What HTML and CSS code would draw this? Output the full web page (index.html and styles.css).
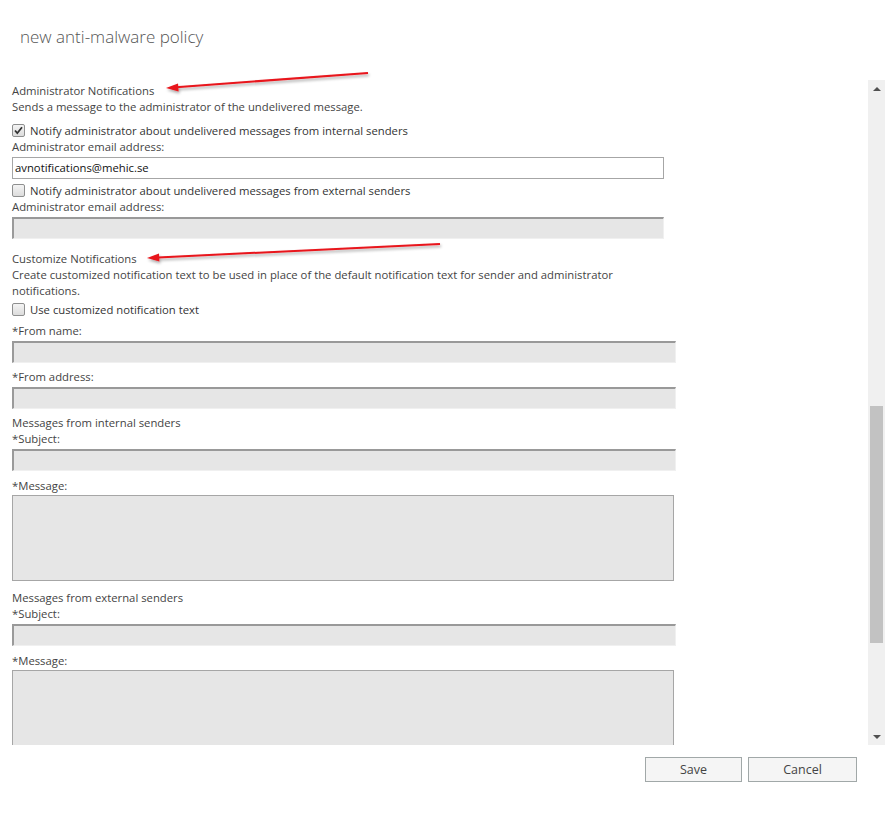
FILE: index.html
```html
<!DOCTYPE html>
<html>
<head>
<meta charset="utf-8">
<link rel="stylesheet" href="styles.css">
</head>
<body>
<div class="page">
  <header class="header"><h1 class="title">new anti-malware policy</h1></header>
  <div class="pane">
    <div class="content">
      <div class="section-title first">Administrator Notifications</div>
      <div class="text">Sends a message to the administrator of the undelivered message.</div>
      <div class="check-row"><span class="cb checked"><svg viewBox="0 0 13 13" width="13" height="13"><path d="M3 6.5 L5.3 9.2 L10 3.2" fill="none" stroke="#333" stroke-width="1.8"/></svg></span><span class="cb-label">Notify administrator about undelivered messages from internal senders</span></div>
      <div class="text">Administrator email address:</div>
      <div class="input active w1">avnotifications@mehic.se</div>
      <div class="check-row tight"><span class="cb"></span><span class="cb-label">Notify administrator about undelivered messages from external senders</span></div>
      <div class="text">Administrator email address:</div>
      <div class="input disabled w1"></div>

      <div class="section-title">Customize Notifications</div>
      <div class="text desc">Create customized notification text to be used in place of the default notification text for sender and administrator notifications.</div>
      <div class="check-row tight"><span class="cb"></span><span class="cb-label">Use customized notification text</span></div>
      <div class="text label">*From name:</div>
      <div class="input disabled w2"></div>
      <div class="text label">*From address:</div>
      <div class="input disabled w2"></div>
      <div class="text label">Messages from internal senders</div>
      <div class="text">*Subject:</div>
      <div class="input disabled w2"></div>
      <div class="text label msg">*Message:</div>
      <div class="textarea"></div>
      <div class="text label group">Messages from external senders</div>
      <div class="text">*Subject:</div>
      <div class="input disabled w2"></div>
      <div class="text label msg">*Message:</div>
      <div class="textarea"></div>
    </div>
    <div class="scrollbar">
      <div class="sb-btn"><span class="tri up"></span></div>
      <div class="sb-track"><div class="sb-thumb"></div></div>
      <div class="sb-btn"><span class="tri down"></span></div>
    </div>
  </div>
  <footer class="footer">
    <button class="btn save">Save</button>
    <button class="btn cancel">Cancel</button>
  </footer>
  <svg class="annot" width="890" height="815" viewBox="0 0 890 815">
    <defs>
      <filter id="sh" x="-10%" y="-50%" width="120%" height="200%">
        <feGaussianBlur in="SourceAlpha" stdDeviation="1.5"/>
        <feOffset dx="1" dy="2" result="b"/>
        <feComponentTransfer><feFuncA type="linear" slope="0.35"/></feComponentTransfer>
        <feMerge><feMergeNode/><feMergeNode in="SourceGraphic"/></feMerge>
      </filter>
    </defs>
    <g filter="url(#sh)" fill="#e8141b" stroke="#e8141b">
      <line x1="368" y1="73" x2="176" y2="87.2" stroke-width="2"/>
      <polygon points="166,88 178,83.5 178.6,91.4" stroke="none"/>
      <line x1="440" y1="244" x2="158" y2="257.5" stroke-width="2"/>
      <polygon points="147,258 159,253.5 159.4,261.5" stroke="none"/>
    </g>
  </svg>
</div>
</body>
</html>
```

FILE: styles.css
```css
* { box-sizing: border-box; }
html, body { margin: 0; padding: 0; background: #fff; }
body {
  font-family: "Open Sans", "Noto Sans", "Liberation Sans", sans-serif;
  font-size: 11.3px;
  color: #444;
}
.page { position: relative; width: 890px; height: 815px; overflow: hidden; }

.header { height: 80px; padding: 25px 0 0 20px; }
.title {
  margin: 0;
  font-size: 17px;
  font-weight: 300;
  color: #555;
  line-height: 24px;
}

.pane { display: flex; height: 665px; }
.content { flex: 1; overflow: hidden; padding: 2px 0 0 12px; }

.text, .section-title, .cb-label { line-height: 17px; margin-bottom: -1px; }
.section-title { color: #444; margin-top: 11px; }
.section-title.first { margin-top: 0; }
.text.desc { max-width: 625px; line-height: 16px; padding-top: 1px; }
.label { margin-top: 5px; }
.label.msg { margin-top: 6px; }
.label.group { margin-top: 8px; }

.check-row { display: flex; align-items: center; height: 16px; margin-top: 8px; }
.check-row.tight { margin-top: 3px; }
.cb-label { color: #333; margin-left: 5px; margin-bottom: 0; }
.cb {
  width: 13px; height: 13px;
  border: 1px solid #8e8f8f;
  border-radius: 2px;
  background: linear-gradient(#f4f4f4, #dcdcdc);
  display: inline-flex;
  flex: none;
  position: relative;
}
.cb svg { position: absolute; left: -1px; top: -1px; }

.input {
  height: 22px;
  margin-top: 3px;
  font-size: 11.3px;
  line-height: 20px;
  color: #111;
  padding-left: 2px;
}
.input.w1 { width: 652px; }
.input.w2 { width: 664px; }
.input.active { border: 1px solid #a6a6a6; background: #fff; }
.input.disabled {
  background: #e6e6e6;
  border-style: solid;
  border-width: 2px 1px 1px 2px;
  border-color: #999 #f0f0f0 #f0f0f0 #9a9a9a;
}

.textarea {
  width: 662px;
  height: 86px;
  margin-top: 2px;
  background: #e6e6e6;
  border: 1px solid #a6a6a6;
}

.scrollbar {
  width: 17px;
  margin-right: 5px;
  background: #f0f0f0;
  display: flex;
  flex-direction: column;
}
.sb-btn { height: 17px; display: flex; align-items: center; justify-content: center; }
.tri { width: 0; height: 0; border-left: 4px solid transparent; border-right: 4px solid transparent; }
.tri.up { border-bottom: 4px solid #505050; }
.tri.down { border-top: 4px solid #505050; }
.sb-track { flex: 1; padding-top: 309px; }
.sb-thumb { height: 237px; margin: 0 2px; background: #c2c2c2; }

.footer { display: flex; justify-content: flex-end; gap: 6px; padding: 12px 33px 0 0; }
.btn {
  height: 25px;
  border: 1px solid #a1a8a8;
  background: #f5f5f5;
  color: #444;
  font-family: inherit;
  font-size: 12.5px;
  padding: 0;
}
.btn.save { width: 97px; }
.btn.cancel { width: 109px; }

.annot { position: absolute; left: 0; top: 0; pointer-events: none; }
```
